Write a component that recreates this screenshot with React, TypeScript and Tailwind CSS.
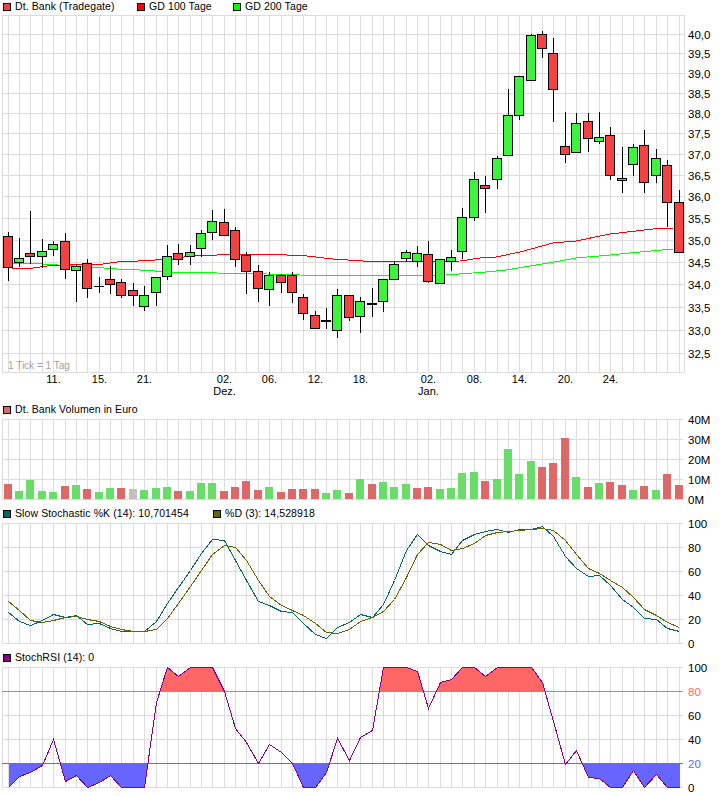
const gx = (i: number) => Math.round(7.7 + 11.37 * i);
const columns = Array.from({ length: 60 }, (_, i) => gx(i));

const RED = "#f44242";
const GREEN = "#3cf43c";

// wick top, body top, body bottom, wick bottom, colour (d = doji, t = thick doji)
const candles: [number, number, number, number, string][] = [
  [232, 236, 267, 281, "r"], [238, 258, 262, 267, "g"], [211, 253, 256, 264, "r"], [239, 251, 256, 268, "g"],
  [241, 244, 249, 256, "g"], [233, 241, 269, 279, "r"], [265, 266, 270, 302, "g"], [259, 263, 288, 298, "r"],
  [277, 286, 286, 293, "d"], [266, 279, 284, 294, "r"], [279, 282, 295, 298, "r"], [283, 290, 295, 306, "r"],
  [286, 295, 306, 311, "g"], [277, 277, 292, 306, "g"], [245, 256, 276, 280, "g"], [244, 253, 259, 265, "r"],
  [245, 252, 256, 265, "g"], [230, 233, 248, 257, "g"], [210, 221, 232, 240, "g"], [209, 222, 235, 235, "r"],
  [227, 230, 259, 267, "r"], [252, 255, 271, 294, "r"], [265, 271, 288, 302, "r"], [272, 275, 289, 306, "g"],
  [274, 275, 282, 293, "r"], [272, 275, 292, 303, "r"], [294, 297, 313, 320, "r"], [311, 315, 328, 329, "r"],
  [308, 320, 320, 329, "t"], [289, 295, 330, 338, "g"], [295, 295, 317, 321, "r"], [297, 301, 316, 333, "g"],
  [288, 303, 303, 317, "t"], [279, 279, 301, 312, "g"], [262, 264, 279, 279, "g"], [250, 252, 258, 262, "g"],
  [246, 253, 261, 267, "g"], [241, 254, 281, 283, "r"], [259, 259, 283, 283, "g"], [250, 257, 261, 271, "g"],
  [208, 217, 251, 259, "g"], [172, 179, 217, 221, "g"], [176, 185, 188, 213, "r"], [156, 158, 179, 189, "g"],
  [89, 115, 155, 155, "g"], [76, 76, 115, 120, "g"], [34, 35, 80, 80, "g"], [31, 34, 48, 58, "r"],
  [38, 53, 89, 122, "r"], [112, 146, 154, 163, "r"], [113, 123, 152, 152, "g"], [113, 121, 138, 152, "r"],
  [112, 137, 141, 144, "g"], [127, 135, 175, 180, "r"], [147, 178, 180, 193, "g"], [144, 147, 164, 176, "g"],
  [130, 145, 182, 193, "r"], [149, 158, 175, 183, "g"], [160, 165, 202, 227, "r"], [190, 202, 252, 253, "r"],
];

const gd100 = "12,268 33,268 47,266 70,265 103,264 117,262 138,261 173,259 190,256 217,255 237,254 273,254 287,255 307,256 333,259 363,261 373,262 460,261 480,258 496,257 520,252 553,243 576,241 610,234 653,229 673,228";
const gd200 = "12,263 43,264 58,265 90,267 117,269 140,270 170,272 217,273 267,274 300,275 363,276 446,275 486,272 506,270 560,261 576,258 610,255 640,252 673,249";

const priceLines = [15, 34, 53, 73, 93, 113, 133, 154, 175, 196, 218, 240, 262, 284, 307, 330, 353, 372];
const priceLabels = ["40,0", "39,5", "39,0", "38,5", "38,0", "37,5", "37,0", "36,5", "36,0", "35,5", "35,0", "34,5", "34,0", "33,5", "33,0", "32,5"];
const dateLabels: [number, string][] = [
  [4, "11."], [8, "15."], [12, "21."], [19, "02."], [23, "06."], [27, "12."], [31, "18."],
  [37, "02."], [41, "08."], [45, "14."], [49, "20."], [53, "24."],
];

const volume: [number, string][] = [
  [484, "r"], [491, "g"], [480, "g"], [491, "g"], [492, "g"], [486, "r"], [485, "g"], [489, "r"],
  [492, "g"], [488, "g"], [488, "r"], [489, "n"], [490, "g"], [488, "g"], [487, "g"], [491, "r"],
  [491, "g"], [483, "g"], [483, "g"], [491, "r"], [487, "r"], [481, "r"], [490, "r"], [487, "g"],
  [492, "r"], [489, "r"], [489, "r"], [489, "r"], [493, "g"], [490, "g"], [493, "r"], [479, "g"],
  [484, "r"], [482, "g"], [487, "g"], [484, "g"], [488, "r"], [487, "r"], [489, "g"], [488, "g"],
  [473, "g"], [472, "g"], [481, "r"], [479, "g"], [449, "g"], [474, "g"], [461, "g"], [467, "r"],
  [463, "r"], [438, "r"], [477, "g"], [487, "r"], [483, "g"], [482, "r"], [485, "r"], [490, "g"],
  [486, "r"], [490, "g"], [474, "r"], [485, "r"],
];
const volumeColors: Record<string, string> = { r: "#dc6868", g: "#6adc6a", n: "#c0c0c0" };

// zoomed readings: stoch values are y = 505 + v / 3, rsi values y = 645 + v / 3
const stochK = [322, 348, 361, 345, 328, 337, 331, 357, 355, 370, 379, 379, 379, 347, 295, 246, 195, 145, 103, 106, 165, 225, 287, 301, 318, 322, 355, 388, 400, 365, 350, 328, 335, 296, 225, 135, 86, 120, 138, 148, 105, 88, 78, 73, 82, 71, 71, 64, 93, 152, 190, 214, 210, 240, 283, 305, 340, 343, 368, 377];
const stochD = [289, 315, 345, 352, 346, 337, 333, 343, 349, 364, 373, 377, 379, 372, 340, 294, 244, 195, 148, 121, 125, 165, 225, 272, 301, 314, 330, 354, 381, 385, 373, 347, 336, 318, 281, 215, 148, 112, 116, 135, 130, 113, 90, 82, 79, 76, 73, 68, 76, 105, 148, 188, 205, 225, 245, 277, 312, 330, 352, 365];
const rsi = [426, 394, 382, 361, 283, 408, 391, 426, 412, 391, 426, 426, 426, 170, 67, 94, 67, 67, 67, 139, 250, 292, 355, 298, 322, 355, 426, 426, 382, 280, 344, 275, 255, 67, 67, 67, 77, 189, 110, 103, 67, 67, 94, 67, 67, 67, 67, 110, 228, 358, 316, 397, 400, 426, 426, 376, 426, 388, 426, 426];

const toPoints = (values: number[], base: number) =>
  values.map((v, i) => `${gx(i) + 0.5},${base + Math.round(v / 3) + 0.5}`).join(" ");

function Legend({ items }: { items: { color: string; label: string; width: string }[] }) {
  return (
    <div className="flex h-[14px] items-center pl-[3px] text-[10.5px] tracking-[0.1px] text-black">
      {items.map((item) => (
        <div key={item.label} className={`flex items-center gap-1 ${item.width}`}>
          <span className="h-[8px] w-[8px] border border-black" style={{ backgroundColor: item.color }} />
          <span className="whitespace-nowrap">{item.label}</span>
        </div>
      ))}
    </div>
  );
}

function Grid({ top, bottom, lines, border }: { top: number; bottom: number; lines: number[]; border?: boolean }) {
  return (
    <g stroke="#dcdcdc">
      {lines.map((y) => (
        <line key={y} x1={2} x2={border ? 685 : 683} y1={y + 0.5} y2={y + 0.5} />
      ))}
      <line x1={2.5} x2={2.5} y1={top} y2={bottom + 1} />
      {columns.map((x) => (
        <line key={x} x1={x + 0.5} x2={x + 0.5} y1={top} y2={bottom + 1} />
      ))}
      {border && <line x1={684.5} x2={684.5} y1={top} y2={bottom + 1} />}
    </g>
  );
}

function AxisLabel({ y, children, color = "#000" }: { y: number; children: string; color?: string }) {
  return (
    <text x={688} y={y + 5} fill={color} className="text-[11.5px]">
      {children}
    </text>
  );
}

function PriceChart() {
  return (
    <svg width={726} height={389} viewBox="0 14 726 389" shapeRendering="crispEdges" className="block overflow-visible">
      <Grid top={15} bottom={372} lines={priceLines} border />
      <polyline points={gd200} fill="none" stroke="#00ff00" />
      <polyline points={gd100} fill="none" stroke="#ff0000" />
      {candles.map(([top, bodyTop, bodyBottom, bottom, kind], i) => {
        const x = gx(i);
        const doji = kind === "d" || kind === "t";
        return (
          <g key={i}>
            <line x1={x + 0.5} x2={x + 0.5} y1={top} y2={bottom} stroke="#000" />
            {doji ? (
              <rect x={x - 5} y={bodyTop} width={10} height={kind === "t" ? 2 : 1} fill="#000" />
            ) : (
              <rect
                x={x - 4.5}
                y={bodyTop + 0.5}
                width={9}
                height={bodyBottom - bodyTop}
                fill={kind === "r" ? RED : GREEN}
                stroke="#000"
              />
            )}
          </g>
        );
      })}
      {priceLabels.map((label, i) => (
        <AxisLabel key={label} y={priceLines[i + 1]}>
          {label}
        </AxisLabel>
      ))}
      {dateLabels.map(([i, label]) => (
        <text key={i} x={gx(i) + 0.5} y={383} textAnchor="middle" className="text-[11px]">
          {label}
        </text>
      ))}
      <text x={gx(19) + 0.5} y={395} textAnchor="middle" className="text-[11px]">
        Dez.
      </text>
      <text x={gx(37) + 0.5} y={395} textAnchor="middle" className="text-[11px]">
        Jan.
      </text>
      <text x={8} y={369} fill="#a0a0a0" className="text-[10px]">
        1 Tick = 1 Tag
      </text>
    </svg>
  );
}

function VolumeChart() {
  const lines = [419, 439, 459, 479, 499];
  const labels = ["40M", "30M", "20M", "10M", "0M"];
  return (
    <svg width={726} height={90} viewBox="0 417 726 90" shapeRendering="crispEdges" className="block overflow-visible">
      <Grid top={419} bottom={499} lines={lines} />
      {volume.map(([top, kind], i) => (
        <rect key={i} x={gx(i) - 4} y={top} width={8} height={499 - top} fill={volumeColors[kind]} />
      ))}
      {labels.map((label, i) => (
        <AxisLabel key={label} y={lines[i]}>
          {label}
        </AxisLabel>
      ))}
    </svg>
  );
}

function StochChart() {
  const lines = [523, 547, 571, 595, 619, 643];
  const labels = ["100", "80", "60", "40", "20", "0"];
  return (
    <svg width={726} height={130} viewBox="0 521 726 130" shapeRendering="crispEdges" className="block overflow-visible">
      <Grid top={523} bottom={643} lines={lines} />
      <polyline points={toPoints(stochK, 505)} fill="none" stroke="#006666" />
      <polyline points={toPoints(stochD, 505)} fill="none" stroke="#666600" />
      {labels.map((label, i) => (
        <AxisLabel key={label} y={lines[i]}>
          {label}
        </AxisLabel>
      ))}
    </svg>
  );
}

function RsiChart() {
  const lines = [667, 691, 715, 739, 763, 787];
  const labels = ["100", "80", "60", "40", "20", "0"];
  const colors = ["#000", "#ff6666", "#000", "#000", "#6666ff", "#000"];
  const points = toPoints(rsi, 645);
  const last = gx(59) + 0.5;
  const first = gx(0) + 0.5;
  return (
    <svg width={726} height={131} viewBox="0 665 726 131" shapeRendering="crispEdges" className="block overflow-visible">
      <defs>
        <clipPath id="over">
          <rect x={0} y={660} width={726} height={31} />
        </clipPath>
        <clipPath id="under">
          <rect x={0} y={764} width={726} height={24} />
        </clipPath>
      </defs>
      <Grid top={667} bottom={787} lines={lines} />
      <polygon points={`${first},787 ${points} ${last},787`} fill="#ff6666" clipPath="url(#over)" />
      <polygon points={`${first},660 ${points} ${last},660`} fill="#6666ff" clipPath="url(#under)" />
      <line x1={2} x2={683} y1={691.5} y2={691.5} stroke="#ff6666" />
      <line x1={2} x2={683} y1={763.5} y2={763.5} stroke="#6666ff" />
      <polyline points={points} fill="none" stroke="#880088" />
      {labels.map((label, i) => (
        <AxisLabel key={label} y={lines[i]} color={colors[i]}>
          {label}
        </AxisLabel>
      ))}
    </svg>
  );
}

export default function App() {
  return (
    <div className="h-[796px] w-[726px] overflow-hidden bg-white font-['Liberation_Sans',Arial,sans-serif]">
      <Legend
        items={[
          { color: RED, label: "Dt. Bank (Tradegate)", width: "w-[134px]" },
          { color: "#ff0000", label: "GD 100 Tage", width: "w-[96px]" },
          { color: "#00ff00", label: "GD 200 Tage", width: "w-[96px]" },
        ]}
      />
      <PriceChart />
      <Legend items={[{ color: "#dc6868", label: "Dt. Bank Volumen in Euro", width: "w-[200px]" }]} />
      <VolumeChart />
      <Legend
        items={[
          { color: "#006666", label: "Slow Stochastic %K (14): 10,701454", width: "w-[210px]" },
          { color: "#666600", label: "%D (3): 14,528918", width: "w-[150px]" },
        ]}
      />
      <StochChart />
      <Legend items={[{ color: "#880088", label: "StochRSI (14): 0", width: "w-[150px]" }]} />
      <RsiChart />
    </div>
  );
}
